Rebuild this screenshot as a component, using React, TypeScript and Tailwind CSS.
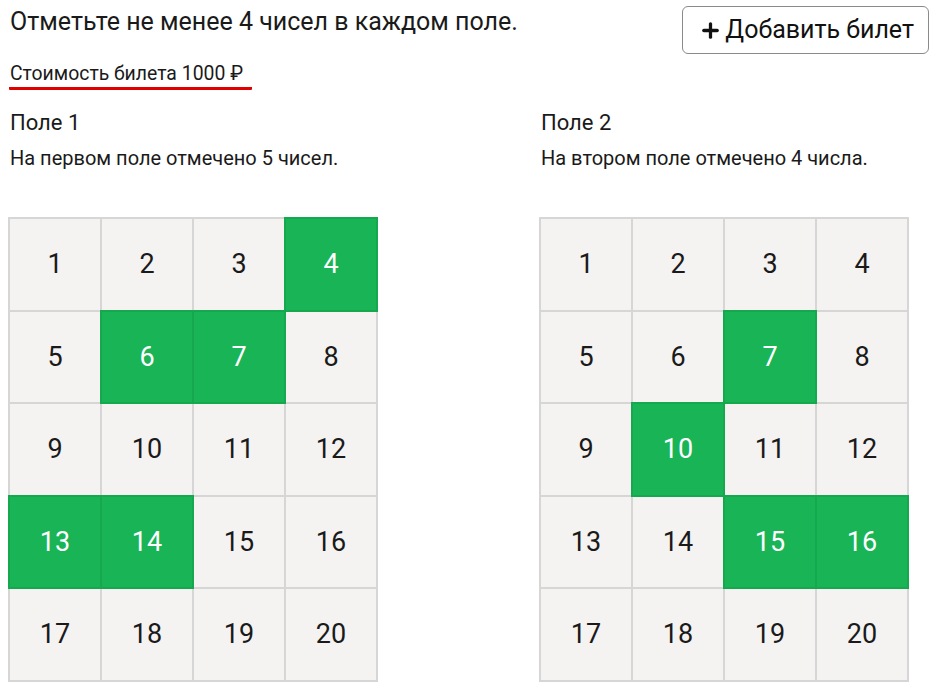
import { Plus } from "lucide-react";

interface Field {
  title: string;
  note: string;
  picked: number[];
}

const fields: Field[] = [
  { title: "Поле 1", note: "На первом поле отмечено 5 чисел.", picked: [4, 6, 7, 13, 14] },
  { title: "Поле 2", note: "На втором поле отмечено 4 числа.", picked: [7, 10, 15, 16] },
];

const numbers = Array.from({ length: 20 }, (_, i) => i + 1);

const NumberGrid = ({ picked }: { picked: number[] }) => (
  <div className="grid grid-cols-[repeat(4,90px)] grid-rows-[repeat(5,90.5px)] gap-[2px] p-[2px] bg-[#d6d6d6] w-fit">
    {numbers.map((n) => {
      const on = picked.includes(n);
      return (
        <div
          key={n}
          className={
            on
              ? "relative z-10 flex items-center justify-center bg-[#18b456] text-white text-[27px] shadow-[0_0_0_2px_#15a84f]"
              : "flex items-center justify-center bg-[#f4f3f2] text-[#1a1a1a] text-[27px]"
          }
        >
          {n}
        </div>
      );
    })}
  </div>
);

export default function App() {
  return (
    <div className="pl-[8px] pr-[6px] pt-[6px] font-['Roboto',sans-serif] text-[#1a1a1a] bg-white min-h-screen">
      <div className="flex justify-between items-start">
        <div className="pl-[2px]">
          <h1 className="text-[25px] leading-[30px] mt-[1px]">Отметьте не менее 4 чисел в каждом поле.</h1>
          <div className="inline-block mt-[25px] -ml-[1px] pl-[1px] pr-[9px] text-[19.4px] leading-[24px] pb-[1px] border-b-[3px] border-[#e00000] rounded-[1px]">
            Стоимость билета 1000 ₽
          </div>
        </div>
        <button className="flex items-center gap-[3px] h-[48px] pl-[16px] pr-[14px] border-[1.5px] border-[#8a8a8a] rounded-[6px] text-[25px] text-[#111] bg-white">
          <Plus className="w-[23px] h-[23px]" strokeWidth={3.4} />
          Добавить билет
        </button>
      </div>

      <div className="flex gap-[161px] mt-[20px]">
        {fields.map((f) => (
          <div key={f.title}>
            <div className="pl-[2px] text-[22px] leading-[26px]">{f.title}</div>
            <div className="pl-[2px] mt-[10px] text-[20px] leading-[24px]">{f.note}</div>
            <div className="mt-[47px]">
              <NumberGrid picked={f.picked} />
            </div>
          </div>
        ))}
      </div>
    </div>
  );
}
